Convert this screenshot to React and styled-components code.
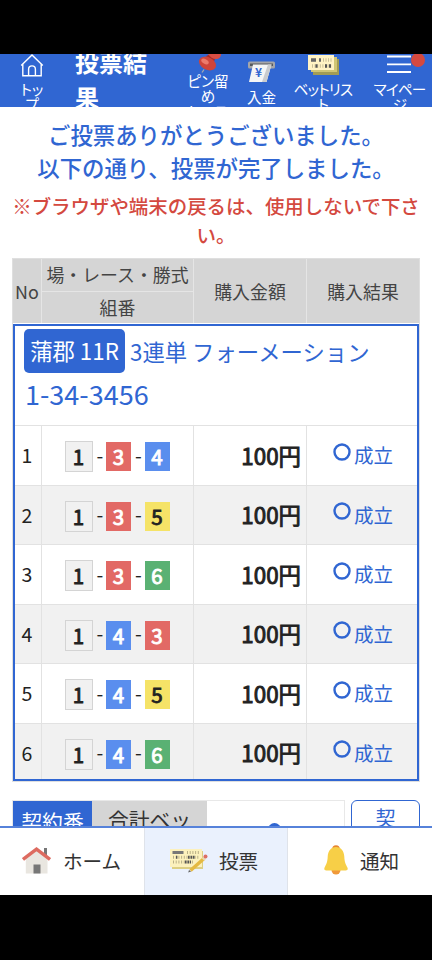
import React from "react";
import styled, { createGlobalStyle } from "styled-components";

const GlobalStyle = createGlobalStyle`
  * {
    box-sizing: border-box;
  }

  body {
    margin: 0;
    background-color: #000;
    color: #222;
    font-family: "Noto Sans CJK JP", sans-serif;
  }
`;

const Screen = styled.div`
  display: flex;
  flex-direction: column;
  width: 432px;
  height: 960px;
  padding: 54px 0 65px;
  background-color: #000;
  overflow: hidden;
`;

const Header = styled.header`
  display: grid;
  grid-template-columns: 64px 108px 72px 35px 88px 65px;
  flex: 0 0 53px;
  height: 53px;
  background-color: #3066d2;
  color: #fff;
  overflow: hidden;
`;

const NavItem = styled.a`
  display: flex;
  flex-direction: column;
  align-items: center;
  margin-top: ${({ $shift }) => $shift || 0}px;
  font-size: 14.6px;
  line-height: 15px;
  letter-spacing: ${({ $tight }) => ($tight ? "-0.8px" : "normal")};
  text-align: center;
  font-feature-settings: "palt";
  white-space: nowrap;

  svg {
    display: block;
    flex-shrink: 0;
    margin-bottom: ${({ $gap }) => $gap || 0}px;
  }
`;

const Title = styled.h1`
  margin: -10px 0 0 11px;
  font-size: 24px;
  font-weight: 700;
  line-height: 35px;
`;

const Main = styled.main`
  flex: 1;
  min-height: 0;
  padding: 11px 12px 0;
  background-color: #fff;
  overflow: hidden;
`;

const Thanks = styled.p`
  margin: 0;
  color: #3066d2;
  font-size: 22.4px;
  font-weight: 500;
  line-height: 33px;
  text-align: center;
  white-space: nowrap;
`;

const Caution = styled.p`
  margin: 7px 0 0;
  color: #d4493f;
  font-size: 19.45px;
  font-weight: 500;
  line-height: 29px;
  text-align: center;
  white-space: nowrap;
`;

const BetTable = styled.section`
  margin-top: 9px;
  border: 1px solid #dfdfdf;
`;

const BetHead = styled.div`
  display: grid;
  grid-template-columns: 28px 152px 113px 1fr;
  height: 64px;
  background-color: #d5d5d5;
  color: #444;
  font-size: 17.9px;
`;

const HeadCell = styled.div`
  display: flex;
  align-items: center;
  justify-content: center;
  border-left: ${({ $first }) => ($first ? "none" : "1px solid #e5e5e5")};
`;

const HeadStack = styled.div`
  display: grid;
  grid-template-rows: 32px 32px;
  border-left: 1px solid #e5e5e5;
  line-height: 30px;
  text-align: center;
  white-space: nowrap;

  span + span {
    border-top: 1px solid #e5e5e5;
  }
`;

const BetBox = styled.div`
  margin-top: 1px;
  border: 2px solid #3066d2;
`;

const RaceInfo = styled.div`
  height: 99px;
  padding: 3px 0 0 9px;
  color: #3066d2;
`;

const RaceLine = styled.div`
  display: flex;
  align-items: center;
  gap: 5px;
  height: 44px;
  font-size: 22.35px;
  white-space: nowrap;
`;

const RaceBadge = styled.span`
  width: 101px;
  height: 44px;
  border-radius: 5px;
  background-color: #3066d2;
  color: #fff;
  line-height: 43px;
  text-align: center;
`;

const Formation = styled.div`
  padding-left: 1px;
  font-size: 27px;
  line-height: 41px;
`;

const BetRow = styled.div`
  display: grid;
  grid-template-columns: 26px 152px 113px 1fr;
  height: ${({ $last }) => ($last ? 56.5 : 59.5)}px;
  border-top: 1px solid #e2e2e2;
  background-color: ${({ $odd }) => ($odd ? "#fff" : "#f1f1f1")};
  overflow: hidden;
`;

const Cell = styled.div`
  display: flex;
  align-items: center;
  justify-content: center;
  height: 59px;
  padding-bottom: 2px;
  border-left: ${({ $first }) => ($first ? "none" : "1px solid #e2e2e2")};
  font-size: 19.5px;
`;

const NoCell = styled(Cell)`
  padding-right: 2px;
`;

const BetCell = styled(Cell)`
  gap: 4px;
  padding: 2px 1px 0 0;
`;

const Amount = styled(Cell)`
  justify-content: flex-end;
  padding-right: 5px;
  font-size: 22.4px;
  -webkit-text-stroke: 0.9px #222;
`;

const Result = styled(Cell)`
  gap: 3px;
  padding-left: 2px;
  color: #3066d2;

  svg {
    margin-top: -6px;
  }
`;

const boatColors = {
  1: "#f1f1f1",
  3: "#e26965",
  4: "#5a8eee",
  5: "#f5e367",
  6: "#5ab173",
};

const Boat = styled.span`
  width: ${({ $no }) => ($no === 1 ? 28 : 25)}px;
  height: ${({ $no }) => ($no === 1 ? 31 : 29)}px;
  border: ${({ $no }) => ($no === 1 ? "1px solid #d4d4d4" : "none")};
  background-color: ${({ $no }) => boatColors[$no]};
  color: ${({ $no }) => ($no === 1 || $no === 5 ? "#222" : "#fff")};
  font-size: 20.5px;
  line-height: 28px;
  text-align: center;
  -webkit-text-stroke: 0.9px currentColor;
`;

const Dash = styled.span`
  width: 5.5px;
  margin-top: -5px;
  text-align: center;
`;

const Summary = styled.section`
  display: flex;
  gap: 6px;
  margin-top: 18px;
`;

const SummaryTable = styled.div`
  display: grid;
  grid-template-columns: 79px 115px 1fr;
  width: 333px;
  height: 80px;
  border: 1px solid #e8e8e8;
  font-size: 20.8px;
  line-height: 30px;
`;

const SummaryCell = styled.div`
  padding-top: ${({ $primary }) => ($primary ? 5 : 3)}px;
  background-color: ${({ $primary }) => ($primary ? "#3066d2" : "#d5d5d5")};
  color: ${({ $primary }) => ($primary ? "#fff" : "#333")};
  text-align: center;
`;

const SummaryValue = styled.div`
  display: flex;
  justify-content: center;
  padding: 22px 3px 0 0;
`;

const Dot = styled.span`
  width: 13px;
  height: 13px;
  border-radius: 50%;
  background-color: #3066d2;
`;

const ContractButton = styled.button`
  width: 69px;
  height: 80px;
  padding: 2px 0 0;
  border: 1px solid #3066d2;
  border-radius: 6px;
  background-color: #fff;
  color: #3066d2;
  font-family: inherit;
  font-size: 20px;
  line-height: 30px;
  display: flex;
  justify-content: center;
`;

const TabBar = styled.nav`
  display: grid;
  grid-template-columns: 144px 143px 1fr;
  flex: 0 0 69px;
  border-top: 2px solid #5682da;
  background-color: #fff;
`;

const Tab = styled.a`
  display: flex;
  align-items: center;
  padding-left: ${({ $left }) => $left}px;
  padding-bottom: 3px;
  gap: ${({ $gap }) => $gap}px;
  border-left: ${({ $first }) => ($first ? "none" : "1px solid #dfe3ea")};
  background-color: ${({ $active }) => ($active ? "#eaf1fd" : "#fff")};
  color: #333;
  font-size: 19.6px;
`;

const HomeOutlineIcon = () => (
  <svg width="24" height="23" viewBox="0 0 24 23" fill="none" stroke="#fff" strokeWidth="1.4">
    <path d="M1.200 11.500 12 1l10.800 10.500M2.800 10.200v11.600h18.400V10.200M8.600 21.500v-6.200a3.400 3.400 0 0 1 6.800 0v6.200" />
  </svg>
);

const PinIcon = () => (
  <svg width="26" height="19" viewBox="0 0 26 19">
    <path d="M9 15.500 7 18.500" stroke="#aaa" strokeWidth="1.300" />
    <path d="M11 2 16 0h8l-4 5-2 5z" fill="#a82c28" />
    <ellipse cx="12.500" cy="9.500" rx="9" ry="6.200" fill="#cf443b" transform="rotate(28 12.500 9.500)" />
    <ellipse cx="10" cy="7.500" rx="4" ry="2.400" fill="#ec7a6c" transform="rotate(28 10 7.500)" />
    <path d="M13 0h13c0 3-2 5-5 5s-6-2-8-5z" fill="#d94e43" />
  </svg>
);

const DepositIcon = () => (
  <svg width="27" height="22" viewBox="0 0 27 22">
    <rect x="0" y="0.5" width="27" height="7" rx="1.5" fill="#a4a5a8" />
    <rect x="2" y="2.500" width="23" height="2.500" fill="#55585d" />
    <path d="M5 3.500h18.500l-5 17.500H1z" fill="#f4f5f6" />
    <path d="M20 3.500h3.500l-5 17.500H14z" fill="#c9cbce" />
    <text x="10.5" y="15.5" fill="#3066d2" fontSize="12" fontWeight="700" textAnchor="middle">
      ¥
    </text>
  </svg>
);

const TicketIcon = () => (
  <svg width="31" height="21" viewBox="0 0 31 21">
    <path d="M5 5h26v16H5z" fill="#a29c55" />
    <path d="M3 3h26v15H3z" fill="#d0c676" />
    <path d="M0 1h26v15H0z" fill="#fff3c5" />
    <path d="M3 6h5M11 6h2" stroke="#666" strokeWidth="3.400" />
    <path d="M15 6h9" stroke="#c9bf98" strokeWidth="3.400" strokeDasharray="1 1.500" />
    <path d="M4 12h20" stroke="#c9bf98" strokeWidth="3.600" strokeDasharray="1 1.600" />
    <path d="M7.500 12h2M17 12h2M21 12h2" stroke="#555" strokeWidth="3.600" />
  </svg>
);

const MenuIcon = () => (
  <svg width="50" height="21" viewBox="0 0 50 21">
    <path d="M12 2.500h24M12 10.300h24M12 18h24" stroke="#fff" strokeWidth="1.800" />
    <circle cx="43" cy="6" r="7" fill="#d4493f" />
  </svg>
);

const HomeIcon = () => (
  <svg width="29" height="27" viewBox="0 0 29 27">
    <path d="M22 1h3v9h-3z" fill="#777" />
    <path d="M3.8 11 14.5 3l11 8v15.5H3.8z" fill="#e9e6e0" />
    <path d="M11.5 17.5h7v9h-7z" fill="#777" />
    <path d="m1 12.5 13.5-10.3L28 12.5" fill="none" stroke="#dd6b60" strokeWidth="3.4" />
  </svg>
);

const VoteIcon = () => (
  <svg width="38" height="26" viewBox="0 0 38 26">
    <path d="M2 4h31v18H2z" fill="#ddcf83" />
    <path d="M0 2h32v18H0z" fill="#fcf1bd" />
    <path d="M2.500 5.500h11" stroke="#777" strokeWidth="3" />
    <path d="M17 5.500h12M3 10.300h26M3 15h20" stroke="#b9b086" strokeWidth="3" strokeDasharray="1 1.700" />
    <path d="M6 10.300h1.400M18 10.300h7M15 15h6" stroke="#555" strokeWidth="3" strokeDasharray="1.500 1" />
    <path d="M20.500 23.500 34 11.500" stroke="#e5b941" strokeWidth="3.400" />
    <path d="m33 12.400 1.800-1.700" stroke="#ead9b0" strokeWidth="3.400" />
    <circle cx="35.500" cy="9.500" r="2" fill="#dc7065" />
    <path d="m19 23-.8 2.600 3-1z" fill="#666" />
  </svg>
);

const BellIcon = () => (
  <svg width="24" height="30" viewBox="0 0 24 30">
    <circle cx="12" cy="4" r="3.800" fill="#e78632" />
    <circle cx="12" cy="25" r="4.500" fill="#f0993a" />
    <path
      d="M12 2c-5 0-8 4-8.300 9.500C3.500 17 2.500 19 .6 22.500c-.8 1.700 0 3 1.700 3h19.400c1.700 0 2.500-1.300 1.700-3-1.900-3.500-2.900-5.500-3.100-11C20 6 17 2 12 2z"
      fill="#f7cf47"
    />
  </svg>
);

const ResultMark = () => (
  <svg width="18" height="18" viewBox="0 0 18 18">
    <circle cx="9" cy="9" r="7.500" fill="none" stroke="#3066d2" strokeWidth="2.400" />
  </svg>
);

const bets = [
  [1, 3, 4],
  [1, 3, 5],
  [1, 3, 6],
  [1, 4, 3],
  [1, 4, 5],
  [1, 4, 6],
];

const App = () => {
  return (
    <>
      <GlobalStyle />
      <Screen>
        <Header>
          <NavItem $gap={4}>
            <HomeOutlineIcon />
            <span>トッ</span>
            <span>プ</span>
          </NavItem>
          <Title>
            投票結
            <br />
            果
          </Title>
          <NavItem>
            <PinIcon />
            <span>ピン留</span>
            <span>め</span>
            <span>レース</span>
          </NavItem>
          <NavItem $shift={7} $gap={6}>
            <DepositIcon />
            入金
          </NavItem>
          <NavItem $tight $gap={6}>
            <TicketIcon />
            <span>ベットリス</span>
            <span>ト</span>
          </NavItem>
          <NavItem $tight $gap={6}>
            <MenuIcon />
            <span>マイペー</span>
            <span>ジ</span>
          </NavItem>
        </Header>

        <Main>
          <Thanks>
            ご投票ありがとうございました。
            <br />
            以下の通り、投票が完了しました。
          </Thanks>
          <Caution>
            ※ブラウザや端末の戻るは、使用しないで下さ
            <br />
            い。
          </Caution>

          <BetTable>
            <BetHead>
              <HeadCell $first>No</HeadCell>
              <HeadStack>
                <span>場・レース・勝式</span>
                <span>組番</span>
              </HeadStack>
              <HeadCell>購入金額</HeadCell>
              <HeadCell>購入結果</HeadCell>
            </BetHead>
            <BetBox>
              <RaceInfo>
                <RaceLine>
                  <RaceBadge>蒲郡 11R</RaceBadge>
                  <span>3連単 フォーメーション</span>
                </RaceLine>
                <Formation>1-34-3456</Formation>
              </RaceInfo>
              {bets.map((bet, i) => (
                <BetRow key={bet.join("-")} $odd={i % 2 === 0} $last={i === bets.length - 1}>
                  <NoCell $first>{i + 1}</NoCell>
                  <BetCell>
                    {bet.map((no, j) => (
                      <React.Fragment key={no}>
                        {j > 0 && <Dash>-</Dash>}
                        <Boat $no={no}>{no}</Boat>
                      </React.Fragment>
                    ))}
                  </BetCell>
                  <Amount>100円</Amount>
                  <Result>
                    <ResultMark />
                    成立
                  </Result>
                </BetRow>
              ))}
            </BetBox>
          </BetTable>

          <Summary>
            <SummaryTable>
              <SummaryCell $primary>契約番</SummaryCell>
              <SummaryCell>合計ベッ</SummaryCell>
              <SummaryValue>
                <Dot />
              </SummaryValue>
            </SummaryTable>
            <ContractButton>契</ContractButton>
          </Summary>
        </Main>

        <TabBar>
          <Tab $first $left={22} $gap={12}>
            <HomeIcon />
            ホーム
          </Tab>
          <Tab $active $left={25} $gap={11}>
            <VoteIcon />
            投票
          </Tab>
          <Tab $left={36} $gap={12}>
            <BellIcon />
            通知
          </Tab>
        </TabBar>
      </Screen>
    </>
  );
};

export default App;
